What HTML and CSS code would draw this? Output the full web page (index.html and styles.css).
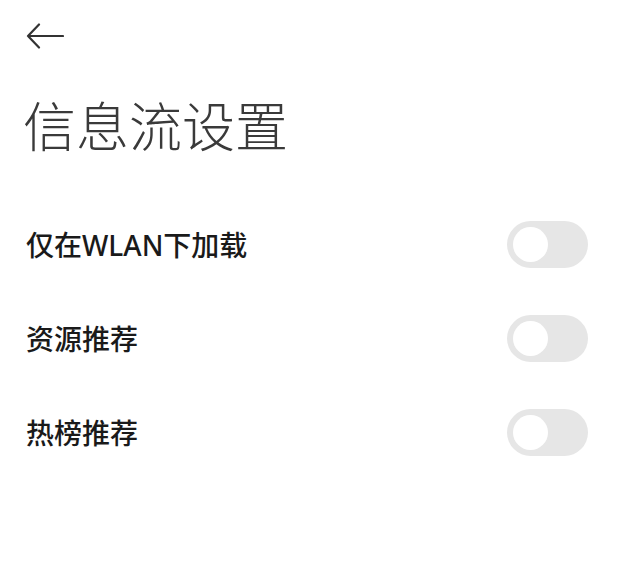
FILE: index.html
```html
<html>
<head>
<meta name="viewport" content="width=device-width, initial-scale=1" />
<title>信息流设置</title>
<link rel="stylesheet" href="styles.css">
</head>
<body>

<div class="topbar">
    <svg class="back" width="38" height="26" viewBox="0 0 38 26">
        <path d="M13 1.5 L2 13 L13 24.5 M2 13 H37" fill="none" stroke="#333" stroke-width="2.2" stroke-linecap="round" stroke-linejoin="round" />
    </svg>
</div>

<h1 class="title">信息流设置</h1>

<div class="settings">
    <div class="row"><span class="label">仅在WLAN下加载</span><span class="switch"><span class="knob"></span></span></div>
    <div class="row"><span class="label">资源推荐</span><span class="switch"><span class="knob"></span></span></div>
    <div class="row"><span class="label">热榜推荐</span><span class="switch"><span class="knob"></span></span></div>
</div>

</body>
</html>
```

FILE: styles.css
```css
body { margin: 0; background: #fff; color: #222; font-family: "Noto Sans CJK SC", "Noto Sans", sans-serif; }
.topbar { height: 71px; display: flex; align-items: center; padding-left: 26px; }
.back { display: block; }
.title { margin: 27px 0 0 0; padding-left: 23px; font-size: 53px; line-height: 52px; font-weight: 300; color: #3a3a3a; letter-spacing: 0; }
.settings { margin-top: 47px; padding: 0 53px 0 26px; }
.row { height: 94px; display: flex; align-items: center; justify-content: space-between; }
.label { font-family: "Noto Sans", "Noto Sans CJK SC", sans-serif; font-size: 28px; font-weight: 500; color: #1a1a1a; }
.switch { width: 81px; height: 47px; border-radius: 24px; background: #e6e6e6; display: flex; align-items: center; padding: 0 6px; box-sizing: border-box; }
.knob { width: 35px; height: 35px; border-radius: 50%; background: #fff; }
```
